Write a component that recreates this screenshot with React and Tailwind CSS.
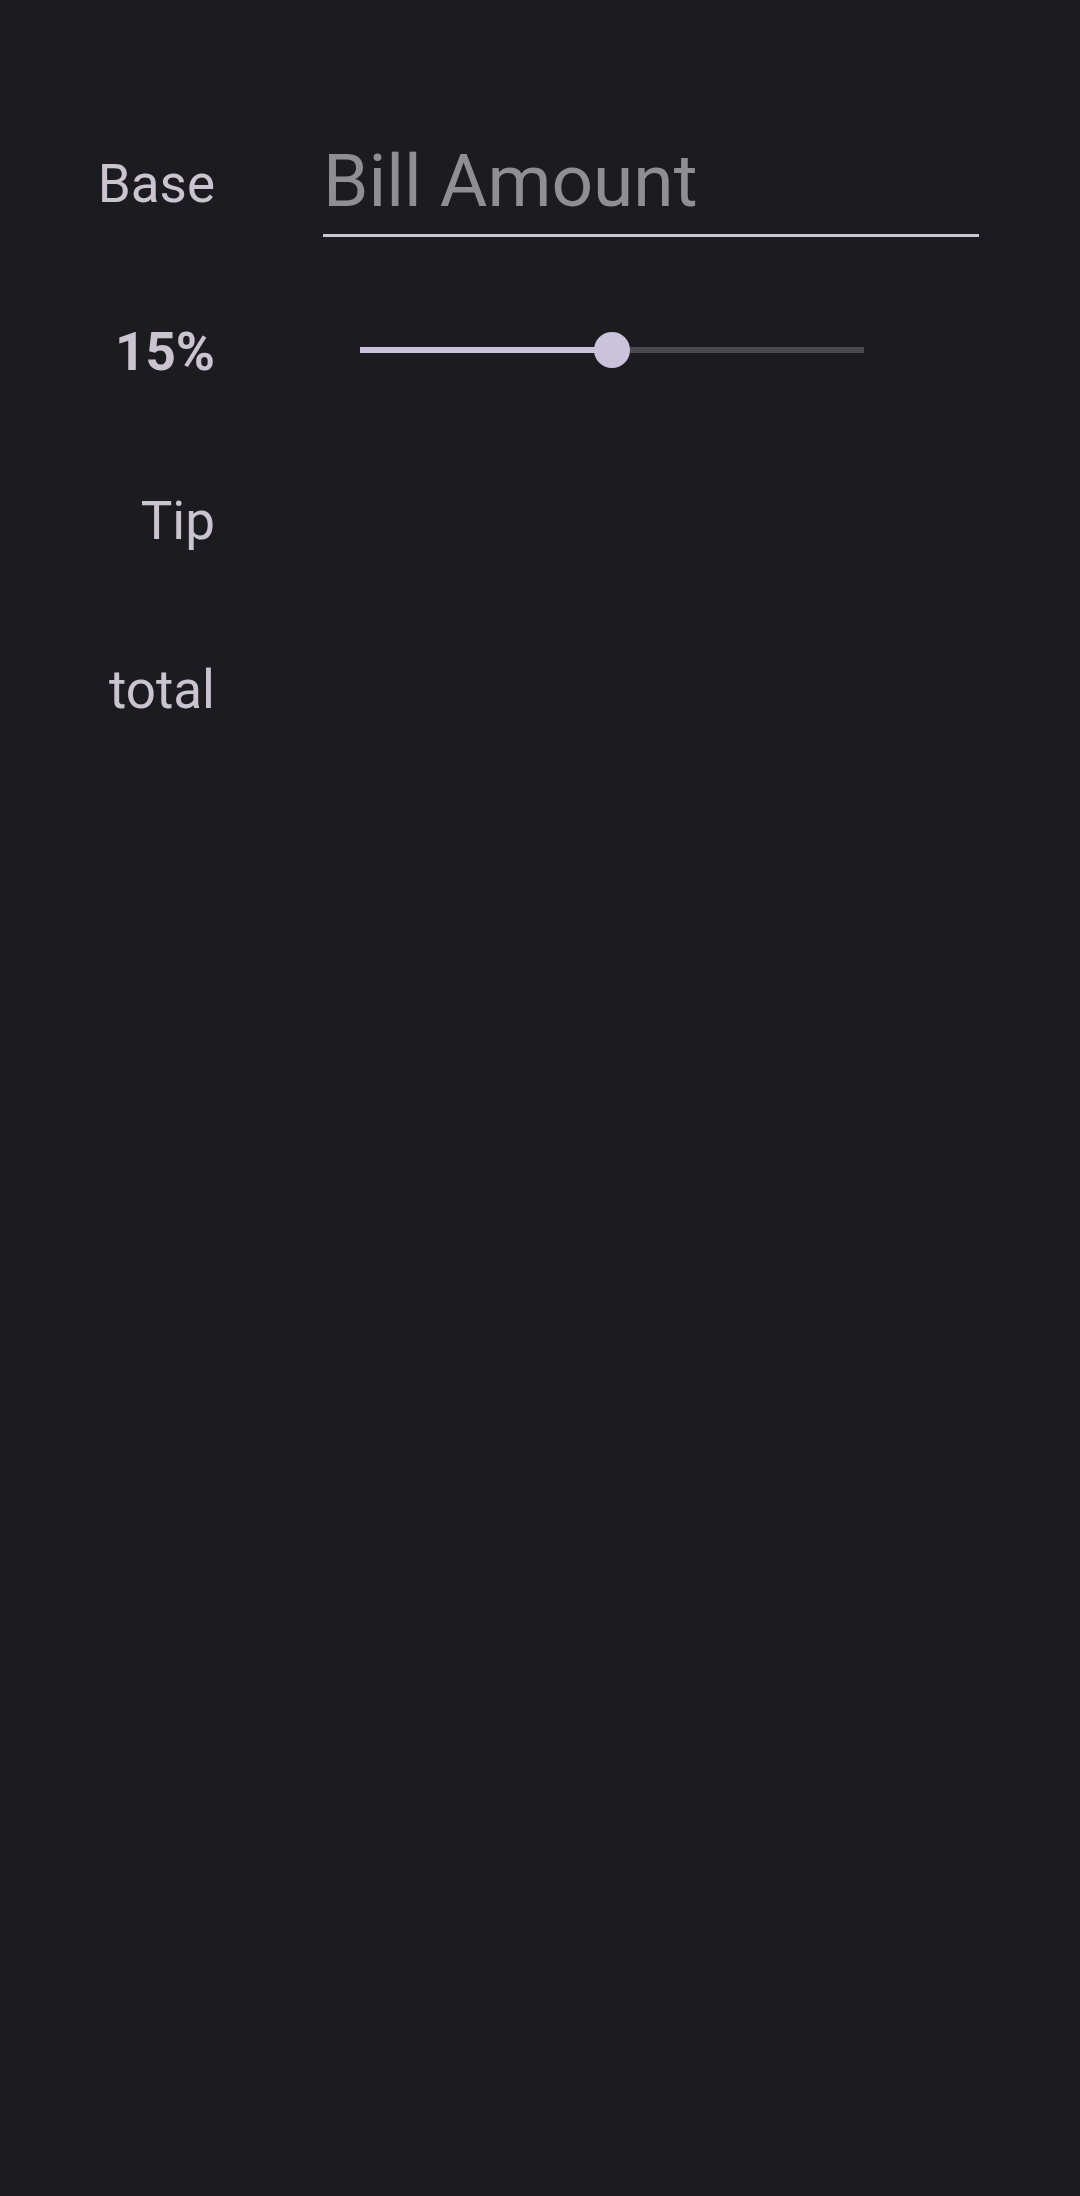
import { useState } from 'react';

const label = "w-[215px] shrink-0 text-right text-[53px] leading-none text-[#cac4d0]";

function TipSlider({ value, max }) {
  const pct = (value / max) * 100;
  return (
    <div className="relative ml-[145px] h-[36px] w-[504px] mb-[6px]">
      <div className="absolute left-0 right-0 top-[15px] h-[6px] bg-[#4b4950]" />
      <div className="absolute left-0 top-[15px] h-[6px] bg-[#cbc3dc]" style={{ width: `${pct}%` }} />
      <div
        className="absolute top-0 h-[36px] w-[36px] -translate-x-1/2 rounded-full bg-[#cbc3dc]"
        style={{ left: `${pct}%` }}
      />
    </div>
  );
}

export default function App() {
  const [bill, setBill] = useState('');
  const tip = 15;

  return (
    <div className="min-h-[2196px] bg-[#1c1b1f] pt-[139px] font-['Roboto',sans-serif]">
      <div className="flex items-start">
        <div className={`${label} mt-[19px]`}>Base</div>
        <div className="ml-[108px] w-[656px] border-b-[3px] border-[#cac4d0] pb-[11px]">
          <input
            value={bill}
            onChange={(e) => setBill(e.target.value)}
            placeholder="Bill Amount"
            className="block h-[84px] w-full bg-transparent text-[73px] leading-none text-[#e6e1e5] outline-none placeholder:text-[#8f8e93]"
          />
        </div>
      </div>

      <div className="mt-[89px] flex h-[53px] items-center">
        <div className={`${label} font-bold`}>{tip}%</div>
        <TipSlider value={tip} max={30} />
      </div>

      <div className="mt-[116px] flex h-[53px] items-center">
        <div className={label}>Tip</div>
      </div>

      <div className="mt-[116px] flex h-[53px] items-center">
        <div className={label}>total</div>
      </div>
    </div>
  );
}
